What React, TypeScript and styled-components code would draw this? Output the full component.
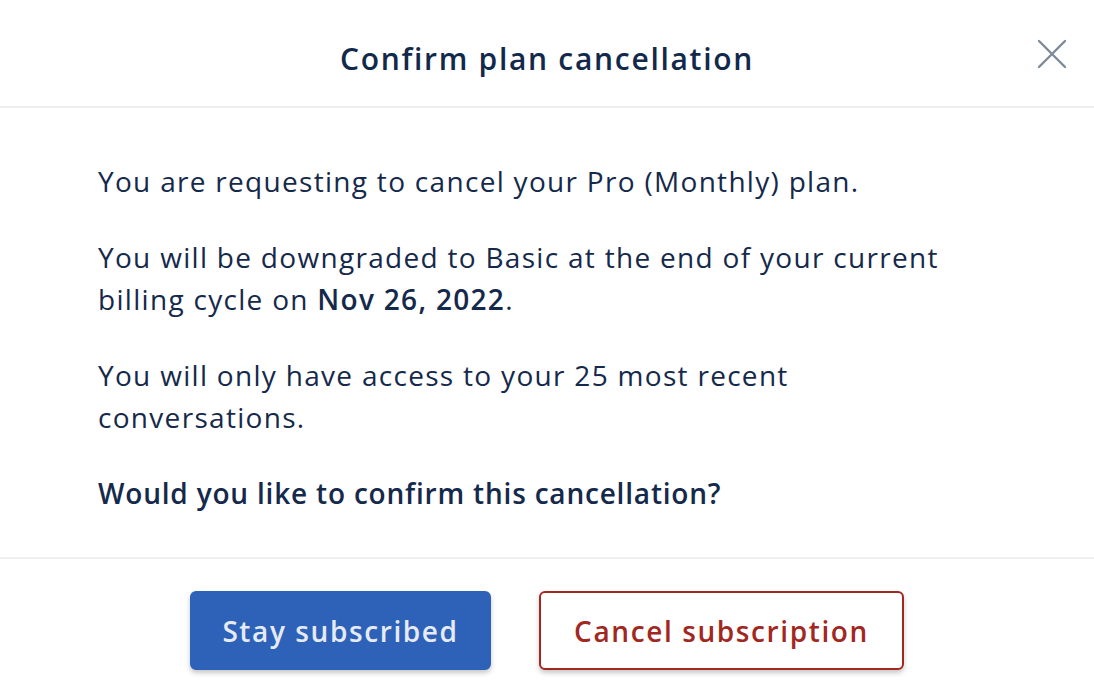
import styled, { createGlobalStyle } from 'styled-components';

const GlobalStyle = createGlobalStyle`
  * {
    box-sizing: border-box;
  }
  body {
    margin: 0;
    background-color: #ffffff;
    font-family: 'Open Sans', 'Noto Sans', sans-serif;
    color: #15294b;
  }
`;

export const Dialog = styled.section`
  display: flex;
  flex-direction: column;
  width: 1094px;
  height: 694px;
  background-color: white;
  overflow: hidden;
`;

export const DialogHeader = styled.header`
  position: relative;
  display: flex;
  align-items: center;
  justify-content: center;
  height: 108px;
  padding-top: 10px;
  border-bottom: 2px solid #eeeff0;
`;

export const DialogTitle = styled.h1`
  margin: 0;
  font-size: 30px;
  font-weight: 600;
  letter-spacing: 1.7px;
  color: #13294b;
`;

// 닫기 버튼 (헤더 위에 겹쳐 있음)
export const CloseBtn = styled.button`
  position: absolute;
  top: 38px;
  right: 26px;
  width: 32px;
  height: 32px;
  display: flex;
  align-items: center;
  justify-content: center;
  padding: 0;
  border: none;
  background: none;
  cursor: pointer;
`;

export const DialogBody = styled.div`
  display: flex;
  flex-direction: column;
  gap: 34px;
  padding: 52px 98px 43px;
  border-bottom: 2px solid #eeeff0;
`;

export const Paragraph = styled.p<{ $strong?: boolean }>`
  margin: 0;
  font-size: 28px;
  line-height: 42px;
  letter-spacing: ${({ $strong }) => ($strong ? '0.8px' : '1.3px')};
  font-weight: ${({ $strong }) => ($strong ? 600 : 400)};

  b {
    font-weight: 600;
  }
`;

export const DialogFooter = styled.footer`
  display: flex;
  justify-content: center;
  gap: 48px;
  padding-top: 32px;
`;

export const ActionBtn = styled.button<{ $variant: 'primary' | 'danger' }>`
  height: 79px;
  padding: 0 20px;
  border-radius: 6px;
  font-family: 'Open Sans', 'Noto Sans', sans-serif;
  font-size: 28px;
  font-weight: 600;
  letter-spacing: 1.6px;
  cursor: pointer;
  box-shadow: 0 3px 5px rgba(0, 0, 0, 0.22);
  border: 2px solid ${({ $variant }) => ($variant === 'primary' ? '#2d62b8' : '#a2271f')};
  background-color: ${({ $variant }) => ($variant === 'primary' ? '#2d62b8' : '#ffffff')};
  color: ${({ $variant }) => ($variant === 'primary' ? '#e6ebf3' : '#a2271f')};
`;

export default function App() {
  return (
    <>
      <GlobalStyle />
      <Dialog>
        <DialogHeader>
          <DialogTitle>Confirm plan cancellation</DialogTitle>
          <CloseBtn aria-label="close">
            <svg width="30" height="30" viewBox="0 0 30 30" fill="none">
              <path d="M2 2L28 28M28 2L2 28" stroke="#7d8a99" strokeWidth="2.4" strokeLinecap="round" />
            </svg>
          </CloseBtn>
        </DialogHeader>
        <DialogBody>
          <Paragraph>You are requesting to cancel your Pro (Monthly) plan.</Paragraph>
          <Paragraph>
            You will be downgraded to Basic at the end of your current billing cycle on <b>Nov 26, 2022</b>.
          </Paragraph>
          <Paragraph>You will only have access to your 25 most recent conversations.</Paragraph>
          <Paragraph $strong>Would you like to confirm this cancellation?</Paragraph>
        </DialogBody>
        <DialogFooter>
          <ActionBtn $variant="primary" style={{ width: 301 }}>Stay subscribed</ActionBtn>
          <ActionBtn $variant="danger" style={{ width: 365 }}>Cancel subscription</ActionBtn>
        </DialogFooter>
      </Dialog>
    </>
  );
}
